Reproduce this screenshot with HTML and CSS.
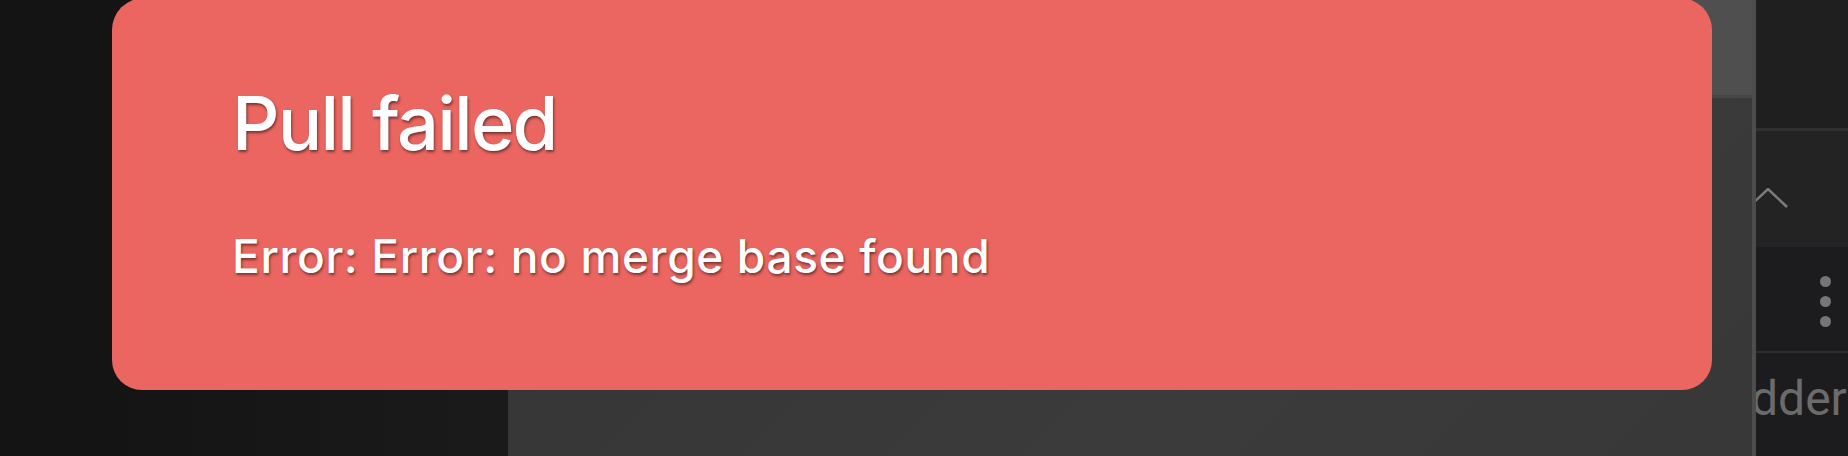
FILE: index.html
```html
<!DOCTYPE html>
<html lang="en">
<head>
<meta charset="utf-8">
<title>Pull failed</title>
<link rel="stylesheet" href="styles.css">
</head>
<body>
<div class="app">
  <div class="left-col"></div>
  <div class="main-panel">
    <div class="main-header"></div>
    <div class="main-body"></div>
  </div>
  <div class="divider"></div>
  <div class="right-panel">
    <div class="rp-top"></div>
    <div class="rp-section">
      <svg class="chevron" width="40" height="24" viewBox="0 0 40 24">
        <polyline points="-7,19 12,1 31,19" fill="none" stroke="#7c7c7c" stroke-width="2.5"/>
      </svg>
    </div>
    <div class="rp-row">
      <div class="kebab"><span></span><span></span><span></span></div>
    </div>
    <div class="rp-text"><span class="rp-label">dder</span></div>
  </div>
  <div class="toast">
    <div class="toast-title">Pull failed</div>
    <div class="toast-msg">Error: Error: no merge base found</div>
  </div>
</div>
</body>
</html>
```

FILE: styles.css
```css
* { box-sizing: border-box; }
html, body {
  margin: 0;
  padding: 0;
  width: 1848px;
  height: 456px;
  overflow: hidden;
  background: #161616;
}
.app {
  position: relative;
  display: flex;
  width: 1848px;
  height: 456px;
}
.left-col {
  width: 508px;
  flex: none;
  background: linear-gradient(90deg, #131313, #1a1a1a);
}
.main-panel {
  width: 1244px;
  flex: none;
  display: flex;
  flex-direction: column;
}
.main-header {
  height: 98px;
  background: #4f4f4f;
  border-bottom: 3px solid #474747;
}
.main-body {
  flex: 1;
  background: linear-gradient(135deg, #353535, #3b3b3b 60%, #383838);
}
.divider {
  width: 4px;
  flex: none;
  background: #4d4d4d;
}
.right-panel {
  flex: 1;
  display: flex;
  flex-direction: column;
  overflow: hidden;
  background: #1c1c1e;
}
.rp-top {
  height: 131px;
  background: #1f1f1f;
  border-bottom: 3px solid #303030;
}
.rp-section {
  height: 116px;
  background: #232323;
  padding-top: 57px;
}
.chevron { display: block; }
.rp-row {
  height: 106px;
  background: #1c1c1e;
  border-bottom: 2px solid #2e2e2e;
  padding-top: 29px;
  display: flex;
  justify-content: flex-end;
  padding-right: 17px;
}
.kebab {
  display: flex;
  flex-direction: column;
  gap: 9px;
}
.kebab span {
  width: 11px;
  height: 11px;
  border-radius: 50%;
  background: #767676;
}
.rp-text {
  flex: 1;
  background: #1c1c1e;
  padding-top: 22px;
}
.rp-label {
  display: block;
  margin-left: -5px;
  font-family: Roboto, "Liberation Sans", sans-serif;
  font-size: 48px;
  line-height: 1;
  color: #6b6b6b;
  white-space: nowrap;
}
.toast {
  position: absolute;
  left: 112px;
  top: -2px;
  width: 1600px;
  height: 392px;
  border-radius: 32px 32px 30px 30px;
  background: #ec6661;
  padding: 88px 0 0 120px;
  color: #ffffff;
  font-family: Inter, "Noto Sans", sans-serif;
  font-weight: 500;
  text-shadow: 1px 2px 3px rgba(0, 0, 0, 0.5);
}
.toast-title {
  font-size: 74px;
  line-height: 1;
  letter-spacing: -1.8px;
}
.toast-msg {
  margin-top: 73px;
  font-size: 46px;
  line-height: 1;
  letter-spacing: 0.65px;
}
```
